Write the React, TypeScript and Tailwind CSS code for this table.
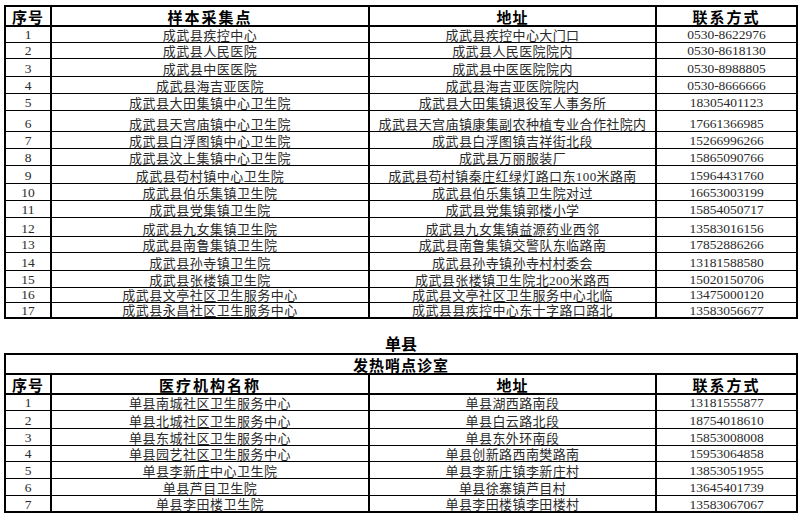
import React from 'react';

type Row = [string, string, string, string];

const chengwu: Row[] = [
  ['1', '成武县疾控中心', '成武县疾控中心大门口', '0530-8622976'],
  ['2', '成武县人民医院', '成武县人民医院院内', '0530-8618130'],
  ['3', '成武县中医医院', '成武县中医医院院内', '0530-8988805'],
  ['4', '成武县海吉亚医院', '成武县海吉亚医院院内', '0530-8666666'],
  ['5', '成武县大田集镇中心卫生院', '成武县大田集镇退役军人事务所', '18305401123'],
  ['6', '成武县天宫庙镇中心卫生院', '成武县天宫庙镇康集副农种植专业合作社院内', '17661366985'],
  ['7', '成武县白浮图镇中心卫生院', '成武县白浮图镇吉祥街北段', '15266996266'],
  ['8', '成武县汶上集镇中心卫生院', '成武县万丽服装厂', '15865090766'],
  ['9', '成武县苟村镇中心卫生院', '成武县苟村镇秦庄红绿灯路口东100米路南', '15964431760'],
  ['10', '成武县伯乐集镇卫生院', '成武县伯乐集镇卫生院对过', '16653003199'],
  ['11', '成武县党集镇卫生院', '成武县党集镇郭楼小学', '15854050717'],
  ['12', '成武县九女集镇卫生院', '成武县九女集镇益源药业西邻', '13583016156'],
  ['13', '成武县南鲁集镇卫生院', '成武县南鲁集镇交警队东临路南', '17852886266'],
  ['14', '成武县孙寺镇卫生院', '成武县孙寺镇孙寺村村委会', '13181588580'],
  ['15', '成武县张楼镇卫生院', '成武县张楼镇卫生院北200米路西', '15020150706'],
  ['16', '成武县文亭社区卫生服务中心', '成武县文亭社区卫生服务中心北临', '13475000120'],
  ['17', '成武县永昌社区卫生服务中心', '成武县县疾控中心东十字路口路北', '13583056677'],
];
const chengwuHeights = [16, 16, 18, 17, 17, 21, 17, 17, 18, 17, 17, 19, 16, 18, 17, 15, 16];

const shanxian: Row[] = [
  ['1', '单县南城社区卫生服务中心', '单县湖西路南段', '13181555877'],
  ['2', '单县北城社区卫生服务中心', '单县白云路北段', '18754018610'],
  ['3', '单县东城社区卫生服务中心', '单县东外环南段', '15853008008'],
  ['4', '单县园艺社区卫生服务中心', '单县创新路西南樊路南', '15953064858'],
  ['5', '单县李新庄中心卫生院', '单县李新庄镇李新庄村', '13853051955'],
  ['6', '单县芦目卫生院', '单县徐寨镇芦目村', '13645401739'],
  ['7', '单县李田楼卫生院', '单县李田楼镇李田楼村', '13583067067'],
];
const shanxianHeights = [16, 18, 17, 16, 17, 17, 17];

const bodyFont = "[font-family:'Liberation_Serif','Noto_Sans_CJK_SC',serif]";
const headFont = "[font-family:'Noto_Sans_CJK_SC','Liberation_Sans',sans-serif]";

const Cols = () => (
  <colgroup>
    <col className="w-[46px]" />
    <col className="w-[318px]" />
    <col className="w-[287px]" />
    <col />
  </colgroup>
);

const HeaderRow = ({ second }: { second: string }) => (
  <tr className={`h-[20px] border-b-2 border-black text-[15px] font-bold leading-none text-black ${headFont}`}>
    <td className="border-r-2 border-black text-center tracking-[1px]">序号</td>
    <td className="border-r-2 border-black text-center tracking-[2px]">{second}</td>
    <td className="border-r-2 border-black text-center tracking-[1px]">地址</td>
    <td className="text-center tracking-[2px]">联系方式</td>
  </tr>
);

const BodyRows = ({ rows, heights }: { rows: Row[]; heights: number[] }) => (
  <>
    {rows.map((r, i) => (
      <tr
        key={r[0]}
        style={{ height: heights[i] }}
        className={`border-b border-black text-[13px] leading-none text-[#2a2a2a] ${bodyFont}`}
      >
        <td className="border-r-2 border-black text-center align-bottom text-[13.5px]">{r[0]}</td>
        <td className="border-r-2 border-black text-center align-bottom tracking-[0.5px]">{r[1]}</td>
        <td className="border-r-2 border-black text-center align-bottom tracking-[0.4px] whitespace-nowrap">{r[2]}</td>
        <td className="text-center align-bottom text-[13.5px]">{r[3]}</td>
      </tr>
    ))}
  </>
);

export default function App() {
  return (
    <div className="w-[800px] h-[518px] overflow-hidden bg-white pl-[4px] pr-[2px] pt-[5px]">
      <table className="w-[794px] table-fixed border-collapse border-2 border-black">
        <Cols />
        <tbody>
          <HeaderRow second="样本采集点" />
          <BodyRows rows={chengwu} heights={chengwuHeights} />
        </tbody>
      </table>

      <div className={`mt-[15px] h-[19px] pt-[1px] text-center text-[16px] font-bold leading-none text-black ${headFont}`}>
        单县
      </div>

      <table className="w-[794px] table-fixed border-collapse border-2 border-black">
        <Cols />
        <tbody>
          <tr className={`h-[20px] border-b-2 border-black text-[15px] font-bold leading-none text-black ${headFont}`}>
            <td colSpan={4} className="text-center tracking-[1px]">
              发热哨点诊室
            </td>
          </tr>
          <HeaderRow second="医疗机构名称" />
          <BodyRows rows={shanxian} heights={shanxianHeights} />
        </tbody>
      </table>
    </div>
  );
}
